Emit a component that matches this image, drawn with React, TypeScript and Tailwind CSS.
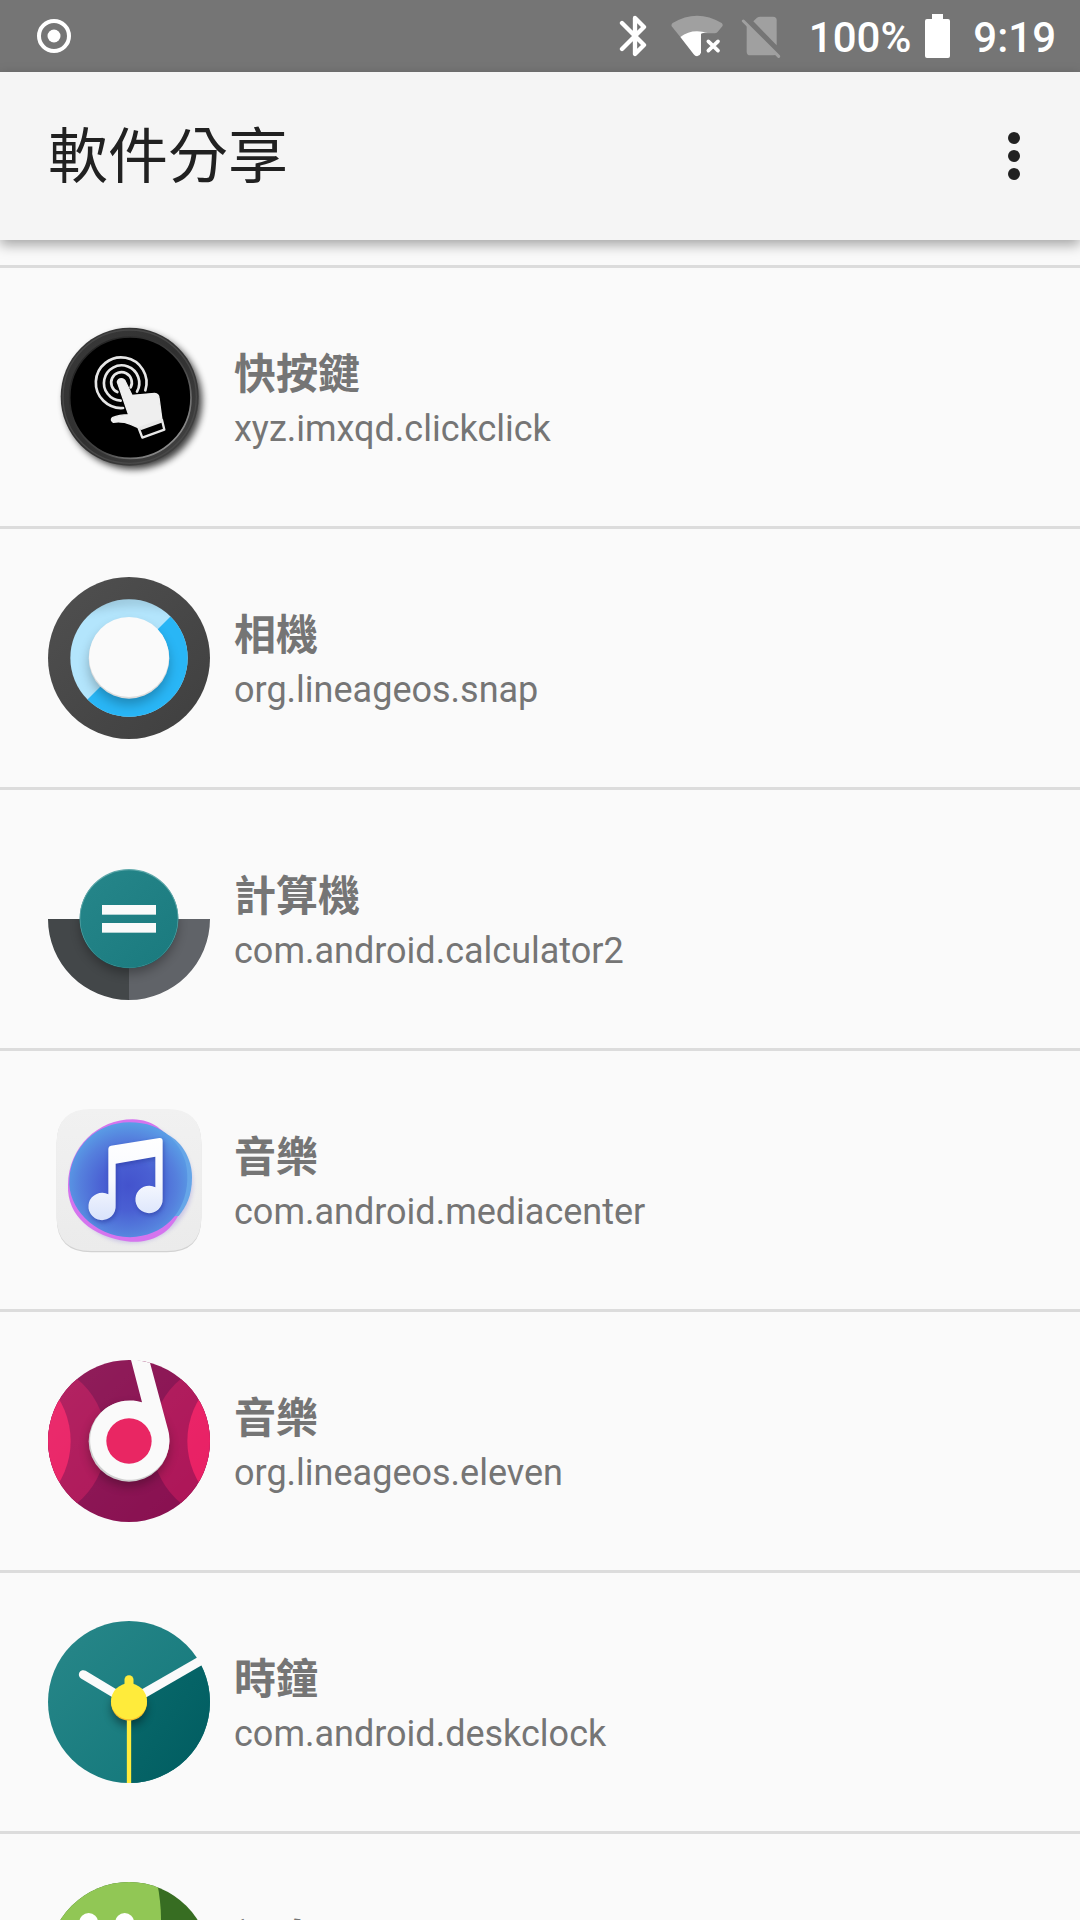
import type { ReactNode } from "react";

function ClickIcon() {
  return (
    <svg viewBox="54 48 486 486" className="size-full overflow-visible" aria-hidden="true">
      <defs>
        <filter id="ck-blur" x="-20%" y="-20%" width="140%" height="140%">
          <feGaussianBlur stdDeviation="11" />
        </filter>
        <linearGradient id="ck-rim" x1="0" y1="0" x2="1" y2="1">
          <stop offset="0" stopColor="#3a3a3a" />
          <stop offset="0.5" stopColor="#303030" />
          <stop offset="1" stopColor="#454545" />
        </linearGradient>
        <linearGradient id="ck-edge" x1="0" y1="0" x2="1" y2="1">
          <stop offset="0" stopColor="#1a1a1a" />
          <stop offset="0.6" stopColor="#444" />
          <stop offset="1" stopColor="#b5b5b5" />
        </linearGradient>
      </defs>
      <circle cx="310" cy="302" r="206" fill="#000" opacity="0.75" filter="url(#ck-blur)" />
      <circle cx="299" cy="290" r="207" fill="url(#ck-rim)" />
      <circle cx="299" cy="290" r="200" fill="none" stroke="#484848" strokeWidth="4" />
      <circle cx="301" cy="293" r="182" fill="#000" stroke="url(#ck-edge)" strokeWidth="5" />
      <g fill="none" stroke="#e6e6e6" strokeWidth="8" strokeLinecap="round">
        <path d="M279 324 A76 76 0 1 1 346 271" />
        <path d="M272 302 A53 53 0 1 1 321 275" />
        <path d="M262 276 A31 31 0 1 1 302 262" />
      </g>
      <path
        d="M262 246 Q264 236 274 236 Q283 236 287 246 L306 286 L374 280 Q386 281 387 293 L396 360 L326 384 L302 373 Q276 363 250 367 Q240 361 247 353 Q268 344 296 344 Z"
        fill="#efefef"
        stroke="#efefef"
        strokeWidth="4"
        strokeLinejoin="round"
      />
      <path d="M326 384 L396 360 L403 389 L337 413 Z" fill="#000" stroke="#e8e8e8" strokeWidth="7" strokeLinejoin="round" />
      <path d="M330 386 L395 363" stroke="#e8e8e8" strokeWidth="10" />
    </svg>
  );
}

function CameraIcon() {
  return (
    <svg viewBox="0 0 486 486" className="size-full" aria-hidden="true">
      <defs>
        <linearGradient id="cm-body" x1="0" y1="0" x2="1" y2="1">
          <stop offset="0" stopColor="#505050" />
          <stop offset="1" stopColor="#3f3f3f" />
        </linearGradient>
        <filter id="cm-blur" x="-30%" y="-30%" width="160%" height="160%">
          <feGaussianBlur stdDeviation="18" />
        </filter>
        <clipPath id="cm-ring">
          <circle cx="243" cy="243" r="176" />
        </clipPath>
      </defs>
      <circle cx="243" cy="243" r="243" fill="url(#cm-body)" />
      <g clipPath="url(#cm-ring)">
        <rect x="60" y="60" width="366" height="366" fill="#b3e5fc" />
        <path d="M60 426 L426 60 V426 Z" fill="#29b6f6" />
        <path d="M60 60 H426 V100 Q243 50 60 110 Z" fill="#000" opacity="0.25" filter="url(#cm-blur)" />
        <circle cx="243" cy="262" r="120" fill="#000" opacity="0.26" filter="url(#cm-blur)" />
      </g>
      <circle cx="243" cy="244" r="121" fill="#dcdcdc" />
      <circle cx="243" cy="240" r="120" fill="#fafafa" />
    </svg>
  );
}

function CalculatorIcon() {
  return (
    <svg viewBox="0 0 486 486" className="size-full" aria-hidden="true">
      <defs>
        <filter id="cc-blur" x="-30%" y="-30%" width="160%" height="160%">
          <feGaussianBlur stdDeviation="16" />
        </filter>
        <linearGradient id="cc-top" x1="0" y1="0" x2="1" y2="1">
          <stop offset="0" stopColor="#26868a" />
          <stop offset="1" stopColor="#1a7a7e" />
        </linearGradient>
        <clipPath id="cc-half">
          <path d="M0 243 H486 A243 243 0 0 1 0 243 Z" />
        </clipPath>
      </defs>
      <g clipPath="url(#cc-half)">
        <rect x="0" y="243" width="243" height="243" fill="#434749" />
        <rect x="243" y="243" width="243" height="243" fill="#606368" />
        <circle cx="243" cy="260" r="146" fill="#000" opacity="0.3" filter="url(#cc-blur)" />
      </g>
      <circle cx="243" cy="243" r="148" fill="#176d71" />
      <circle cx="243" cy="241" r="148" fill="#62aaac" />
      <circle cx="243" cy="243" r="146" fill="url(#cc-top)" />
      <rect x="162" y="201" width="162" height="29" fill="#fafafa" />
      <rect x="162" y="255" width="162" height="29" fill="#fafafa" />
    </svg>
  );
}

const notePath =
  "M235 176 Q235 169 243 167 L388 144 Q398 143 398 153 V326 A41 41 0 1 1 376 292 V200 L257 221 V346 A41 41 0 1 1 235 313 Z";

function MediaIcon() {
  return (
    <svg viewBox="54 27 486 486" className="size-full" aria-hidden="true">
      <defs>
        <radialGradient id="md-blue" cx="0.5" cy="0.55" r="0.55">
          <stop offset="0" stopColor="#4353cd" />
          <stop offset="0.4" stopColor="#4a60d3" />
          <stop offset="0.75" stopColor="#5580dd" />
          <stop offset="1" stopColor="#5a9ee6" />
        </radialGradient>
        <linearGradient id="md-note" x1="0" y1="0" x2="0" y2="1">
          <stop offset="0" stopColor="#ffffff" />
          <stop offset="0.5" stopColor="#f8faff" />
          <stop offset="1" stopColor="#d9e3fb" />
        </linearGradient>
        <linearGradient id="md-card" x1="0" y1="0" x2="0" y2="1">
          <stop offset="0" stopColor="#f1f1f1" />
          <stop offset="1" stopColor="#ebebeb" />
        </linearGradient>
        <filter id="md-blur" x="-20%" y="-20%" width="140%" height="140%">
          <feGaussianBlur stdDeviation="7" />
        </filter>
      </defs>
      <path d="M80 160 Q80 59 184 59 H410 Q514 59 514 160 V384 Q514 487 410 487 H184 Q80 487 80 384 Z" fill="#d2d2d2" />
      <path d="M80 158 Q80 57 184 57 H410 Q514 57 514 158 V380 Q514 483 410 483 H184 Q80 483 80 380 Z" fill="url(#md-card)" />
      <ellipse cx="305" cy="280" rx="183" ry="178" fill="#7a6bd0" opacity="0.3" filter="url(#md-blur)" />
      <path d="M114 285 C116 170 205 88 308 88 C372 90 400 120 436 168 C480 230 480 330 442 382 C410 440 350 462 290 454 C190 440 110 380 114 285 Z" fill="#d574ee" />
      <path d="M400 128 C454 148 486 205 486 262 C486 318 468 352 446 378 L400 380 Z" fill="#66a6e8" />
      <path d="M118 268 C124 172 200 97 298 97 C350 97 390 112 420 140 C460 180 474 220 472 270 C468 370 400 438 300 442 C190 440 112 350 118 268 Z" fill="url(#md-blue)" />
      <path d={notePath} fill="#28359b" opacity="0.55" filter="url(#md-blur)" transform="translate(3 7)" />
      <path d={notePath} fill="url(#md-note)" />
    </svg>
  );
}

function ElevenIcon() {
  return (
    <svg viewBox="0 0 486 486" className="size-full" aria-hidden="true">
      <defs>
        <clipPath id="el-disc">
          <circle cx="243" cy="243" r="243" />
        </clipPath>
        <filter id="el-blur" x="-30%" y="-30%" width="160%" height="160%">
          <feGaussianBlur stdDeviation="16" />
        </filter>
        <linearGradient id="el-gloss" x1="0" y1="0" x2="1" y2="1">
          <stop offset="0" stopColor="#fff" stopOpacity="0.07" />
          <stop offset="1" stopColor="#fff" stopOpacity="0" />
        </linearGradient>
      </defs>
      <g clipPath="url(#el-disc)">
        <rect width="486" height="486" fill="#880e4f" />
        <circle cx="-68" cy="243" r="243" fill="#ad1457" />
        <circle cx="554" cy="243" r="243" fill="#ad1457" />
        <circle cx="-175" cy="243" r="243" fill="#e91e63" />
        <circle cx="661" cy="243" r="243" fill="#e91e63" />
        <circle cx="243" cy="258" r="120" fill="#000" opacity="0.32" filter="url(#el-blur)" />
        <rect width="486" height="486" fill="url(#el-gloss)" />
      </g>
      <circle cx="243" cy="244" r="121" fill="#cfcfcf" />
      <path d="M248 -4 L282 127 A119 119 0 1 0 361 212 L306 8 Z" fill="#fafafa" />
      <circle cx="243" cy="243" r="68" fill="#e92663" />
    </svg>
  );
}

function ClockIcon() {
  return (
    <svg viewBox="0 0 486 486" className="size-full" aria-hidden="true">
      <defs>
        <clipPath id="dc-disc">
          <circle cx="243" cy="243" r="243" />
        </clipPath>
        <filter id="dc-blur" x="-50%" y="-50%" width="200%" height="200%">
          <feGaussianBlur stdDeviation="14" />
        </filter>
        <linearGradient id="dc-face" x1="0" y1="0" x2="1" y2="1">
          <stop offset="0" stopColor="#288789" />
          <stop offset="1" stopColor="#117679" />
        </linearGradient>
        <linearGradient id="dc-dark" x1="0" y1="0" x2="1" y2="1">
          <stop offset="0" stopColor="#0a6a6c" />
          <stop offset="1" stopColor="#005c60" />
        </linearGradient>
      </defs>
      <g clipPath="url(#dc-disc)">
        <rect width="486" height="486" fill="url(#dc-face)" />
        <path d="M243 243 L486 103 V486 H243 Z" fill="url(#dc-dark)" />
        <circle cx="243" cy="262" r="52" fill="#000" opacity="0.42" filter="url(#dc-blur)" />
      </g>
      <path d="M243 243 L470 112" stroke="#fafafa" strokeWidth="27" />
      <path d="M243 243 L106 161" stroke="#fafafa" strokeWidth="27" strokeLinecap="round" />
      <path d="M243 243 V486" stroke="#ffeb3b" strokeWidth="13" />
      <circle cx="243" cy="245" r="54" fill="#f6bd2c" />
      <path d="M243 243 V176" stroke="#ffeb3b" strokeWidth="27" strokeLinecap="round" />
      <circle cx="243" cy="241" r="54" fill="#ffeb3b" />
    </svg>
  );
}

function MessagesIcon() {
  return (
    <svg viewBox="0 0 486 486" className="size-full" aria-hidden="true">
      <defs>
        <clipPath id="ms-disc">
          <circle cx="243" cy="243" r="243" />
        </clipPath>
      </defs>
      <g clipPath="url(#ms-disc)">
        <rect width="486" height="486" fill="#376d22" />
        <path d="M0 0 H327 Q339 60 339 110 V486 H0 Z" fill="#91c755" />
      </g>
      <circle cx="122" cy="121" r="28" fill="#fff" />
      <circle cx="230" cy="121" r="28" fill="#fff" />
    </svg>
  );
}

function BluetoothIcon() {
  return (
    <svg viewBox="0 0 84 132" className="h-11 w-7" fill="none" stroke="#fff" strokeWidth="13" strokeLinejoin="round" strokeLinecap="round" aria-label="Bluetooth">
      <path d="M9 27 L75 93 L48 120 V12 L75 39 L9 105" />
    </svg>
  );
}

function WifiIcon() {
  return (
    <svg viewBox="0 0 156 126" className="h-[42px] w-[52px]" aria-label="Wi-Fi">
      <path d="M2 34 Q0 28 5 24 Q78 -20 152 24 Q157 28 154 34 L139 52 Q136 55 131 55 H110 L92 54 H91 L28 66 Z" fill="#a0a0a0" />
      <path d="M28 66 Q62 40 110 54 Q92 52 90 58 V113 Q88 121 78 124 Q72 124 68 118 Z" fill="#fff" />
      <path d="M112 79 L141 107 M141 79 L112 107" stroke="#fff" strokeWidth="11" strokeLinecap="round" />
    </svg>
  );
}

function NoSimIcon() {
  return (
    <svg viewBox="0 0 120 132" className="h-11 w-10" fill="#a0a0a0" aria-label="No SIM">
      <path d="M37 22 L48 11 Q52 8 58 8 H96 Q107 8 107 19 V94 Z" />
      <path d="M17 30 L108 120 Q104 124 96 124 H28 Q17 124 17 113 Z" />
      <path d="M7 21 L113 127" stroke="#a0a0a0" strokeWidth="9" strokeLinecap="round" />
    </svg>
  );
}

type AppEntry = { name: string; pkg: string; icon: ReactNode };

const apps: AppEntry[] = [
  { name: "快按鍵", pkg: "xyz.imxqd.clickclick", icon: <ClickIcon /> },
  { name: "相機", pkg: "org.lineageos.snap", icon: <CameraIcon /> },
  { name: "計算機", pkg: "com.android.calculator2", icon: <CalculatorIcon /> },
  { name: "音樂", pkg: "com.android.mediacenter", icon: <MediaIcon /> },
  { name: "音樂", pkg: "org.lineageos.eleven", icon: <ElevenIcon /> },
  { name: "時鐘", pkg: "com.android.deskclock", icon: <ClockIcon /> },
  { name: "訊息", pkg: "com.android.messaging", icon: <MessagesIcon /> },
];

export default function App() {
  return (
    <div className="flex h-screen flex-col overflow-hidden bg-[#fafafa] font-[Roboto,'Noto_Sans_CJK_TC',sans-serif]">
      <div className="flex h-[72px] shrink-0 items-center bg-[#757575] pr-6 pl-9 text-white">
        <svg viewBox="0 0 36 36" className="size-9" aria-label="Recording">
          <circle cx="18" cy="18" r="15" fill="none" stroke="#fff" strokeWidth="4" />
          <circle cx="18" cy="18" r="6.5" fill="#fff" />
        </svg>
        <div className="ml-auto flex items-center">
          <BluetoothIcon />
          <span className="ml-6 flex"><WifiIcon /></span>
          <span className="ml-[18px] flex"><NoSimIcon /></span>
          <span className="ml-7 pt-1 text-[42px] leading-none font-medium">100%</span>
          <svg viewBox="0 0 25 44" className="ml-[14px] h-11 w-[25px]" fill="#fff" aria-label="Battery">
            <path d="M7 0 H18 V5 H23 Q25 5 25 7 V42 Q25 44 23 44 H2 Q0 44 0 42 V7 Q0 5 2 5 H7 Z" />
          </svg>
          <span className="ml-[23px] pt-1 text-[42px] leading-none font-medium">9:19</span>
        </div>
      </div>

      <header className="relative z-10 flex h-[168px] shrink-0 items-center justify-between bg-[#f5f5f5] pr-9 pl-12 shadow-[0_5px_12px_rgba(0,0,0,0.34)]">
        <h1 className="pt-1 text-[60px] leading-[72px] text-[#212121]">軟件分享</h1>
        <button type="button" aria-label="More options" className="flex h-24 w-[60px] flex-col items-center justify-center gap-[6px]">
          <span className="size-3 rounded-full bg-[#212121]" />
          <span className="size-3 rounded-full bg-[#212121]" />
          <span className="size-3 rounded-full bg-[#212121]" />
        </button>
      </header>

      <main className="min-h-0 flex-1 overflow-hidden pt-[25px]">
        <ul>
          {apps.map((app) => (
            <li key={app.pkg} className="flex items-center gap-6 border-t-[3px] border-[#dcdcdc] px-12 py-12">
              <div className="size-[162px] shrink-0">{app.icon}</div>
              <div className="min-w-0 pt-1 text-[#757575]">
                <h2 className="text-[42px] leading-[60px] font-bold">{app.name}</h2>
                <p className="text-[36px] leading-[48px]">{app.pkg}</p>
              </div>
            </li>
          ))}
        </ul>
      </main>
    </div>
  );
}
